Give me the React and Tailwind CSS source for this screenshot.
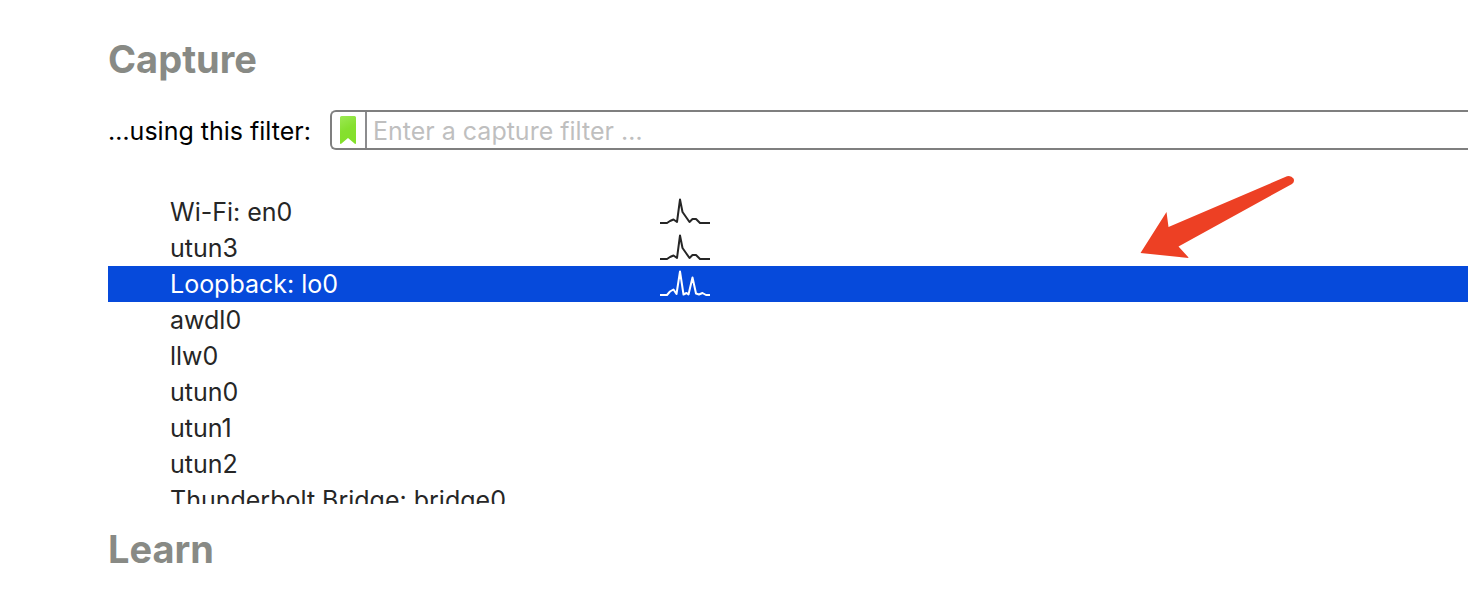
import React, { useState } from "react";

const interfaces = [
  { name: "Wi-Fi: en0", trace: "single" },
  { name: "utun3", trace: "single" },
  { name: "Loopback: lo0", trace: "double" },
  { name: "awdl0" },
  { name: "llw0" },
  { name: "utun0" },
  { name: "utun1" },
  { name: "utun2" },
  { name: "Thunderbolt Bridge: bridge0" },
];

const traces = {
  single: "0,29 7,29 10,27 13.5,25.5 17,28 20,5.5 22.5,18 26,23 29.5,28 32.5,25 36,25 40,29 50,29",
  double: "0,29 7,29 10,25.5 13.5,23.5 16.5,28 20,5.5 23.5,28.5 26.5,27 28.5,28.5 32.5,11.5 36,27.5 39,28.5 42.5,27 46,29 50,29",
};

function Sparkline({ kind }) {
  return (
    <svg className="h-9 w-[50px]" viewBox="0 0 50 36" fill="none" stroke="currentColor" strokeWidth="2" strokeLinejoin="round" aria-hidden="true">
      <polyline points={traces[kind]} />
    </svg>
  );
}

export default function App() {
  const [selected, setSelected] = useState("Loopback: lo0");
  return (
    <main className="relative overflow-hidden bg-white pt-9 pb-5 pl-[108px] font-['Inter',sans-serif] text-[25px] text-black">
      <h1 className="text-[38px] leading-[46px] font-bold text-[#888a85]">Capture</h1>
      <div className="mt-7 flex items-center">
        <label htmlFor="filter" className="w-[222px] shrink-0 pt-0.5 leading-[38px]">…using this filter:</label>
        <div className="flex h-10 grow rounded-l-md border-2 border-r-0 border-[#7f7f7f]">
          <button aria-label="Filter bookmarks" className="flex w-[35px] shrink-0 items-center border-r-2 border-[#8c8c8e] pl-2">
            <svg className="h-7 w-4" viewBox="0 0 16 28" aria-hidden="true">
              <defs>
                <linearGradient id="leaf" x1="0" y1="0" x2="0.3" y2="1">
                  <stop offset="0" stopColor="#9ce954" />
                  <stop offset="0.55" stopColor="#86e02f" />
                  <stop offset="1" stopColor="#83e02a" />
                </linearGradient>
              </defs>
              <path d="M0 1.5Q0 0 1.5 0H14.5Q16 0 16 1.5V27.500Q15.500 28.300 14.500 27.500L8 22L1.500 27.500Q0.500 28.300 0 27.500Z" fill="url(#leaf)" />
            </svg>
          </button>
          <input id="filter" placeholder="Enter a capture filter …" className="min-w-0 grow px-1.5 pt-1 outline-none placeholder:text-[#bfbfbf]" />
        </div>
      </div>
      <ul className="mt-11 h-[310px] overflow-hidden text-[#262626]">
        {interfaces.map(({ name, trace }) => (
          <li key={name}>
            <button
              onClick={() => setSelected(name)}
              className={`flex h-9 w-full items-center pl-[62px] text-left whitespace-nowrap ${selected === name ? "bg-[#064adb] text-white" : ""}`}
            >
              <span className="w-[490px] shrink-0 leading-9">{name}</span>
              {trace && <Sparkline kind={trace} />}
            </button>
          </li>
        ))}
      </ul>
      <h2 className="mt-[22px] text-[38px] leading-[46px] font-bold text-[#888a85]">Learn</h2>
      <svg className="pointer-events-none absolute top-[170px] left-[1136px] h-[92px] w-[162px]" viewBox="1136 170 162 92" aria-hidden="true">
        <path d="M1140.500 253L1166.500 212L1168.500 227L1287 176.200Q1291 175 1293.500 178.500Q1295 182 1292 184L1178.500 246.500L1189 258Z" fill="#ed4024" />
      </svg>
    </main>
  );
}
